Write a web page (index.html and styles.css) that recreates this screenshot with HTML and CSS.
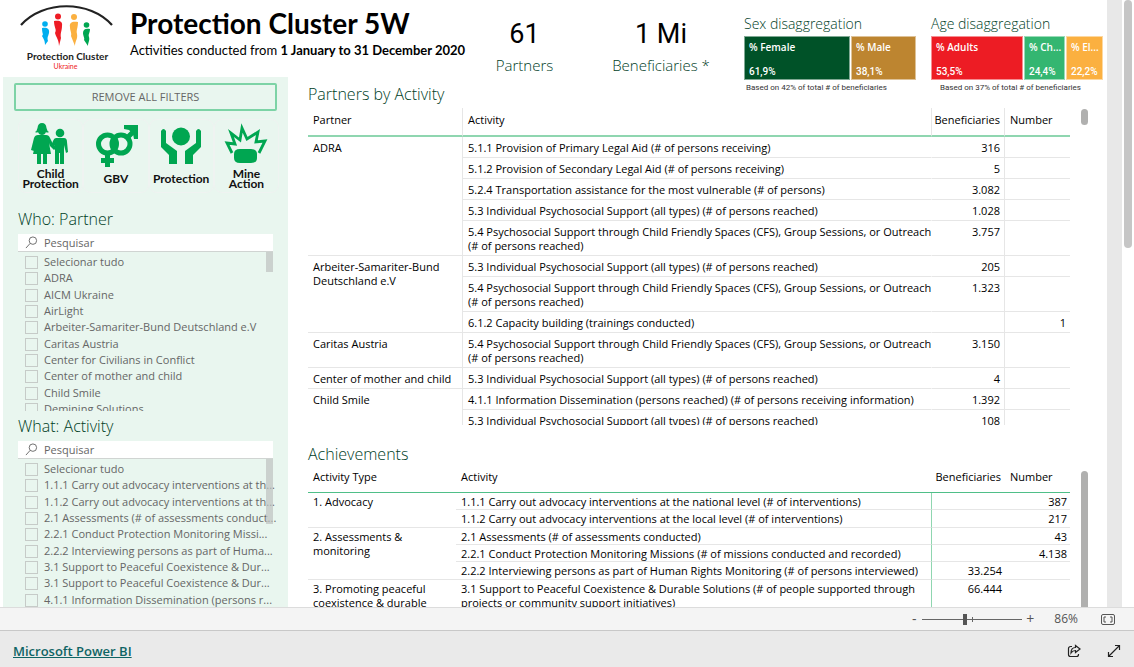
FILE: index.html
```html
<!DOCTYPE html>
<html lang="en">
<head>
<meta charset="utf-8">
<meta name="viewport" content="width=device-width, initial-scale=1">
<title>Protection Cluster 5W</title>
<link rel="stylesheet" href="styles.css">
</head>
<body>
<div class="viewer">
  <div class="report">
    <header class="masthead">
      <svg class="logo" viewBox="0 0 96 68" role="img" aria-label="Protection Cluster Ukraine">
        <path d="M1 21C23 -4 70 -4 92 21" fill="none" stroke="#222" stroke-width="2.2"/>
        <g fill="#00aeef"><circle cx="25" cy="20" r="2.800"/><path d="M22 24c4-1 8 0 7 5-1 4-2 4-1 8l-3 4c0-5-2-7-3-9 2-2 0-2 0-8z"/></g>
        <g fill="#ee1c25"><circle cx="38" cy="12.500" r="3"/><path d="M34 17c5-1 9 0 8 5 0 5-2 7-1 12l-2 8c0-6-3-9-4-13 2-4-1-5-1-12z"/></g>
        <g fill="#fbb040"><circle cx="54" cy="13" r="3"/><path d="M58 18c-5-1-9 0-8 5 0 4 2 6 1 9l4 10c0-5 3-7 2-12-1-4 1-6 1-12z"/></g>
        <g fill="#00a651"><circle cx="66.500" cy="21" r="2.800"/><path d="M70 25c-4-1-7 0-7 4 0 3 2 5 1 7l4 6c0-4 2-5 1-9-1-3 1-4 1-8z"/></g>
        <text x="47.500" y="56" text-anchor="middle" class="logo-name">Protection Cluster</text>
        <text x="45.500" y="65" text-anchor="middle" class="logo-place">Ukraine</text>
      </svg>
      <div>
        <h1 class="title">Protection Cluster 5W</h1>
        <p class="subtitle">Activities conducted from <b>1 January to 31 December 2020</b></p>
      </div>
    </header>

    <section class="summary">
      <div class="kpi"><strong class="kpi-value">61</strong><span class="kpi-label">Partners</span></div>
      <div class="kpi kpi-wide"><strong class="kpi-value">1 Mi</strong><span class="kpi-label">Beneficiaries *</span></div>
      <div class="split">
        <h2 class="heading small">Sex disaggregation</h2>
        <div class="treemap sex">
          <div class="tile female"><span>% Female</span><span class="share">61,9%</span></div>
          <div class="tile male"><span>% Male</span><span class="share">38,1%</span></div>
        </div>
        <p class="note">Based on 42% of total # of beneficiaries</p>
      </div>
      <div class="split">
        <h2 class="heading small">Age disaggregation</h2>
        <div class="treemap age">
          <div class="tile adults"><span>% Adults</span><span class="share">53,5%</span></div>
          <div class="tile children"><span>% Ch...</span><span class="share">24,4%</span></div>
          <div class="tile elderly"><span>% El...</span><span class="share">22,2%</span></div>
        </div>
        <p class="note indent">Based on 37% of total # of beneficiaries</p>
      </div>
    </section>

    <aside class="sidebar">
      <button class="reset" type="button">REMOVE ALL FILTERS</button>
      <div class="sectors">
        <button class="sector" type="button">
          <svg viewBox="0 0 44 42" aria-hidden="true"><g fill="#00a651"><path d="M6 9q2-1 2.500-4Q9 0 13 0t4.500 5Q18 8 20 9q-2 1-3 0-1 3-4 3t-4-3q-1 1-3 0z"/><path d="M9 12h8q3 0 4 3l4 8 4-3 1 2-5 5-4-4-1-3 2 11h-4v10h-4V31h-2v10H8V31H4L7 18l-2 10-3-1 3-12q1-3 4-3z"/><circle cx="31" cy="10" r="4.300"/><path d="M27 15h8q3 0 3 4l1 10-2 1-2-8v19h-4V30h-1v11h-4V22l-1 3-3-2 2-5q1-3 3-3z"/></g></svg>
          <span>Child<br>Protection</span>
        </button>
        <button class="sector" type="button">
          <svg viewBox="0 0 44 42" aria-hidden="true"><g fill="none" stroke="#00a651" stroke-width="5"><circle cx="13.500" cy="21" r="9"/><circle cx="27" cy="21" r="9"/><path d="M13.500 30v14M7 37.500h13M33 15l6-6"/></g><path d="M30 2h14v14h-4l-1-5-4-4-5-1z" fill="#00a651"/></svg>
          <span>GBV</span>
        </button>
        <button class="sector" type="button">
          <svg viewBox="0 0 44 42" aria-hidden="true"><g fill="#00a651"><circle cx="22" cy="13.500" r="9"/><path d="M2 8q2.500-4 5 0v12l11 8v13H10V32L2 24zM42 8q-2.500-4-5 0v12l-11 8v13h8V32l8-8z"/></g></svg>
          <span>Protection</span>
        </button>
        <button class="sector" type="button">
          <svg viewBox="0 0 44 42" aria-hidden="true"><path d="M8 30L3 20l8 1-4-11 9 7 2-12 5 11 11-7-2 10 9-1-6 12" fill="none" stroke="#00a651" stroke-width="2.800"/><path d="M16 26h11q6 0 6 5v4q0 5-6 5H16q-6 0-6-5v-4q0-5 6-5z" fill="#00a651"/></svg>
          <span>Mine<br>Action</span>
        </button>
      </div>

      <h2 class="heading">Who: Partner</h2>
      <label class="search"><svg viewBox="0 0 14 14" aria-hidden="true"><circle cx="8.500" cy="5" r="4"/><path d="M5.500 8L1 13"/></svg><input type="text" placeholder="Pesquisar" aria-label="Pesquisar partner"></label>
      <div class="listbox">
        <ul class="options">
          <li><label><input type="checkbox"><span>Selecionar tudo</span></label></li>
          <li><label><input type="checkbox"><span>ADRA</span></label></li>
          <li><label><input type="checkbox"><span>AICM Ukraine</span></label></li>
          <li><label><input type="checkbox"><span>AirLight</span></label></li>
          <li><label><input type="checkbox"><span>Arbeiter-Samariter-Bund Deutschland e.V</span></label></li>
          <li><label><input type="checkbox"><span>Caritas Austria</span></label></li>
          <li><label><input type="checkbox"><span>Center for Civilians in Conflict</span></label></li>
          <li><label><input type="checkbox"><span>Center of mother and child</span></label></li>
          <li><label><input type="checkbox"><span>Child Smile</span></label></li>
          <li><label><input type="checkbox"><span>Demining Solutions</span></label></li>
        </ul>
        <i class="list-thumb"></i>
      </div>

      <h2 class="heading">What: Activity</h2>
      <label class="search"><svg viewBox="0 0 14 14" aria-hidden="true"><circle cx="8.500" cy="5" r="4"/><path d="M5.500 8L1 13"/></svg><input type="text" placeholder="Pesquisar" aria-label="Pesquisar activity"></label>
      <div class="listbox">
        <ul class="options">
          <li><label><input type="checkbox"><span>Selecionar tudo</span></label></li>
          <li><label><input type="checkbox"><span>1.1.1 Carry out advocacy interventions at th...</span></label></li>
          <li><label><input type="checkbox"><span>1.1.2 Carry out advocacy interventions at th...</span></label></li>
          <li><label><input type="checkbox"><span>2.1 Assessments (# of assessments conduct...</span></label></li>
          <li><label><input type="checkbox"><span>2.2.1 Conduct Protection Monitoring Missi...</span></label></li>
          <li><label><input type="checkbox"><span>2.2.2 Interviewing persons as part of Huma...</span></label></li>
          <li><label><input type="checkbox"><span>3.1 Support to Peaceful Coexistence &amp; Dur...</span></label></li>
          <li><label><input type="checkbox"><span>3.1 Support to Peaceful Coexistence &amp; Dur...</span></label></li>
          <li><label><input type="checkbox"><span>4.1.1 Information Dissemination (persons r...</span></label></li>
        </ul>
        <i class="list-thumb tall"></i>
      </div>
    </aside>

    <main class="main">
      <h2 class="heading">Partners by Activity</h2>
      <div class="pane partners-pane">
        <table class="grid partners">
          <colgroup><col class="c-name"><col><col class="c-ben"><col class="c-num"></colgroup>
          <thead><tr><th>Partner</th><th>Activity</th><th class="num">Beneficiaries</th><th>Number</th></tr></thead>
          <tbody>
            <tr><td rowspan="5">ADRA</td><td>5.1.1 Provision of Primary Legal Aid (# of persons receiving)</td><td class="num">316</td><td></td></tr>
            <tr><td>5.1.2 Provision of Secondary Legal Aid (# of persons receiving)</td><td class="num">5</td><td></td></tr>
            <tr><td>5.2.4 Transportation assistance for the most vulnerable (# of persons)</td><td class="num">3.082</td><td></td></tr>
            <tr><td>5.3 Individual Psychosocial Support (all types) (# of persons reached)</td><td class="num">1.028</td><td></td></tr>
            <tr><td>5.4 Psychosocial Support through Child Friendly Spaces (CFS), Group Sessions, or Outreach<br>(# of persons reached)</td><td class="num">3.757</td><td></td></tr>
            <tr><td rowspan="3">Arbeiter-Samariter-Bund<br>Deutschland e.V</td><td>5.3 Individual Psychosocial Support (all types) (# of persons reached)</td><td class="num">205</td><td></td></tr>
            <tr><td>5.4 Psychosocial Support through Child Friendly Spaces (CFS), Group Sessions, or Outreach<br>(# of persons reached)</td><td class="num">1.323</td><td></td></tr>
            <tr><td>6.1.2 Capacity building (trainings conducted)</td><td></td><td class="num">1</td></tr>
            <tr><td>Caritas Austria</td><td>5.4 Psychosocial Support through Child Friendly Spaces (CFS), Group Sessions, or Outreach<br>(# of persons reached)</td><td class="num">3.150</td><td></td></tr>
            <tr><td>Center of mother and child</td><td>5.3 Individual Psychosocial Support (all types) (# of persons reached)</td><td class="num">4</td><td></td></tr>
            <tr><td rowspan="2">Child Smile</td><td>4.1.1 Information Dissemination (persons reached) (# of persons receiving information)</td><td class="num">1.392</td><td></td></tr>
            <tr><td>5.3 Individual Psychosocial Support (all types) (# of persons reached)</td><td class="num">108</td><td></td></tr>
          </tbody>
        </table>
        <i class="pane-thumb short"></i>
      </div>

      <h2 class="heading">Achievements</h2>
      <div class="pane results-pane">
        <table class="grid results">
          <colgroup><col class="c-type"><col><col class="c-ben"><col class="c-num"></colgroup>
          <thead><tr><th>Activity Type</th><th>Activity</th><th class="num">Beneficiaries</th><th>Number</th></tr></thead>
          <tbody>
            <tr><td rowspan="2">1. Advocacy</td><td>1.1.1 Carry out advocacy interventions at the national level (# of interventions)</td><td></td><td class="num">387</td></tr>
            <tr class="last"><td>1.1.2 Carry out advocacy interventions at the local level (# of interventions)</td><td></td><td class="num">217</td></tr>
            <tr><td rowspan="3">2. Assessments &amp;<br>monitoring</td><td>2.1 Assessments (# of assessments conducted)</td><td></td><td class="num">43</td></tr>
            <tr><td>2.2.1 Conduct Protection Monitoring Missions (# of missions conducted and recorded)</td><td></td><td class="num">4.138</td></tr>
            <tr class="last"><td>2.2.2 Interviewing persons as part of Human Rights Monitoring (# of persons interviewed)</td><td class="num">33.254</td><td></td></tr>
            <tr><td>3. Promoting peaceful<br>coexistence &amp; durable<br>solutions</td><td>3.1 Support to Peaceful Coexistence &amp; Durable Solutions (# of people supported through<br>projects or community support initiatives)</td><td class="num">66.444</td><td></td></tr>
          </tbody>
        </table>
        <i class="pane-thumb"></i>
      </div>
    </main>
  </div>
  <div class="gutter"></div>
  <div class="page-scroll"><i></i></div>
</div>

<div class="zoombar">
  <button type="button" aria-label="Zoom out">-</button>
  <span class="slider"><input type="range" min="0" max="100" value="42" aria-label="Zoom"></span>
  <button type="button" aria-label="Zoom in">+</button>
  <output class="level">86%</output>
  <button class="fit" type="button" aria-label="Fit to page"><svg viewBox="0 0 14 11"><rect x=".5" y=".5" width="13" height="10" rx="1.500"/><path d="M5 3H3v5h2M9 3h2v5H9"/></svg></button>
</div>

<footer class="footer">
  <a class="brand" href="#">Microsoft Power BI</a>
  <button type="button" aria-label="Share"><svg viewBox="0 0 14 14"><path d="M5 2.500H3.500a2 2 0 0 0-2 2v6a2 2 0 0 0 2 2h6a2 2 0 0 0 2-2V10M8.500 1.500l4.500 3.500-4.500 3.500v-2C6 6.500 5 7.500 4 9c0-3.500 2-5.500 4.500-5.500z"/></svg></button>
  <button type="button" aria-label="Full screen"><svg viewBox="0 0 14 14"><path d="M1.500 12.500l11-11M8 1.500h4.500V6M1.500 8v4.500H6"/></svg></button>
</footer>
</body>
</html>
```
FILE: styles.css
```css
* { box-sizing: border-box; }

body {
  margin: 0;
  height: 100vh;
  display: flex;
  flex-direction: column;
  overflow: hidden;
  font-family: "Open Sans", "Noto Sans", sans-serif;
  font-size: 11px;
  line-height: 14px;
  color: #000;
  background: #fff;
}

h1, h2, p, ul { margin: 0; padding: 0; }
button { font: inherit; padding: 0; border: 0; background: none; color: inherit; }

.viewer { flex: 1; min-height: 0; display: flex; }
.report {
  flex: 1;
  min-width: 0;
  display: grid;
  grid-template-columns: 288px 180px minmax(0, 1fr);
  grid-template-rows: 77px 6px minmax(0, 1fr);
  overflow: hidden;
}
.gutter { width: 15px; background: #e8e8e8; }
.page-scroll { width: 12px; padding: 0 2px; }
.page-scroll i { display: block; height: 248px; border-radius: 4px; background: #c6c6c6; }

/* Title block */
.masthead { grid-area: 1 / 1 / 2 / 3; display: flex; gap: 14px; padding: 4px 0 0 20px; white-space: nowrap; }
.logo { width: 96px; height: 68px; flex: none; }
.logo-name { font: 700 10px Lato, sans-serif; fill: #222; }
.logo-place { font: 7px Lato, sans-serif; fill: #ee1c25; }
.title { font: 700 28px/38px "Lato", sans-serif; color: #000; }
.subtitle { font: 13px/17px "Lato", sans-serif; color: #000; }

/* Figures and treemaps */
.summary { grid-area: 1 / 3 / 3 / 4; display: flex; justify-content: flex-end; gap: 15px; padding-right: 4px; }
.kpi { flex: none; display: flex; flex-direction: column; align-items: center; width: 107px; padding-top: 16px; }
.kpi-wide { width: 136px; }
.kpi-value { font: 400 27px/36px Roboto, sans-serif; color: #000; }
.kpi-label { font-size: 15px; font-weight: 300; line-height: 26px; color: #00401f; white-space: nowrap; }
.heading { font-size: 16px; font-weight: 300; line-height: 18px; color: #00401f; }
.heading.small { font-size: 14px; line-height: 20px; }
.split { flex: none; width: 172px; padding-top: 14px; white-space: nowrap; }
.treemap { display: grid; gap: 1px; height: 44px; margin-top: 2px; }
.sex { grid-template-columns: 106fr 65fr; }
.age { grid-template-columns: 92fr 41fr 37fr; }
.tile {
  display: flex;
  flex-direction: column;
  justify-content: space-between;
  min-width: 0;
  padding: 4px 0 0 4px;
  overflow: hidden;
  color: #fff;
  font-size: 10px;
  font-weight: 600;
  line-height: 13px;
  border: 1px solid rgba(255, 255, 255, .5);
}
.share { font: 500 10px/14px Roboto, sans-serif; }
.female { background: #005228; }
.male { background: #bd8530; }
.adults { background: #ed1c24; }
.children { background: #34b671; }
.elderly { background: #fbb040; }
.note { font: 8px/10px Roboto, sans-serif; padding: 3px 0 0 2px; color: #333; }
.note.indent { padding-left: 9px; }

/* Filters */
.sidebar {
  grid-area: 2 / 1 / 4 / 2;
  margin-left: 3px;
  padding: 6px 11px 0;
  overflow: hidden;
  background: #e9f6ef;
  color: #666;
}
.reset { display: block; width: 100%; height: 28px; border: 2px solid #7dd3a6; border-radius: 2px; }
.sectors { display: grid; grid-template-columns: repeat(4, 1fr); margin: 8px -2px 17px 4px; }
.sector {
  display: flex;
  flex-direction: column;
  align-items: center;
  height: 74px;
  padding-top: 3px;
  border: 1px solid #eff3f1;
  border-radius: 8px;
  color: #111;
  font: 700 12px/10px Lato, sans-serif;
}
.sector svg { width: 44px; height: 42px; overflow: visible; }
.sector span { flex: 1; display: flex; align-items: center; }
.sidebar .heading { margin: 0 4px 6px; }
.search {
  display: flex;
  align-items: center;
  gap: 6px;
  height: 18px;
  margin: 0 4px;
  padding-left: 7px;
  background: #fff;
  border-bottom: 1px solid #d0d4d2;
}
.search svg { width: 13px; height: 13px; fill: none; stroke: #666; }
.search input { flex: 1; min-width: 0; height: 16px; padding: 0; border: 0; outline: 0; font: inherit; background: none; }
.search input::placeholder { color: #666; opacity: 1; }
.listbox { position: relative; height: 159px; margin: 0 0 6px 4px; overflow: hidden; }
.options { list-style: none; padding: 2px 0 0 7px; }
.options li:nth-child(3n) { padding-top: 1px; }
.options label { display: flex; gap: 6px; align-items: center; height: 16px; white-space: nowrap; }
.options input { appearance: none; flex: none; width: 13px; height: 13px; margin: 0; border: 1px solid #c6cbc8; }
.list-thumb { position: absolute; top: 0; right: 4px; width: 7px; height: 20px; background: rgba(190, 194, 192, .7); }
.list-thumb.tall { height: 65px; }

/* Tables */
.main { grid-area: 3 / 2 / 4 / 4; padding: 0 19px 0 20px; overflow: hidden; display: flex; flex-direction: column; }
.main .heading { flex: none; line-height: 22px; }
.pane { display: flex; gap: 11px; align-items: flex-start; overflow: hidden; }
.partners-pane { flex: none; height: 317px; margin: 3px 0 18px; }
.results-pane { flex: 1; min-height: 0; margin-top: 1px; }
.pane-thumb { flex: none; width: 7px; border-radius: 4px 4px 0 0; background: #b0b0af; align-self: stretch; margin-top: 5px; }
.pane-thumb.short { align-self: flex-start; height: 16px; margin-top: 1px; border-radius: 4px; }
.grid { flex: 1; width: 100%; min-width: 0; table-layout: fixed; border-collapse: separate; border-spacing: 0; }
.c-name { width: 155px; }
.c-type { width: 148px; }
.c-ben { width: 73px; }
.c-num { width: 65px; }
.grid th { font-weight: 400; text-align: left; padding: 0 5px; white-space: nowrap; }
.grid td { padding: 0 5px; vertical-align: top; white-space: nowrap; border-bottom: 1px solid #e6e6e6; }
.grid .num { text-align: right; }
.grid th.num { padding-left: 0; }
.partners th { height: 29px; padding-bottom: 3px; border-bottom: 2px solid #8fd6b0; }
.partners td { height: 21px; padding-top: 4px; padding-bottom: 2px; }
.partners th:not(:last-child), .partners td:not(:last-child) { border-right: 1px solid #e6e6e6; }
.partners td:nth-last-child(3) { border-right-color: transparent; }
.partners .num { padding-right: 4px; }
.results th { height: 27px; padding-bottom: 4px; border-bottom: 1px solid #4fbf88; }
.results th.num { padding-right: 4px; }
.results td { height: 17px; padding-top: 2px; }
.results td.num { padding-right: 3px; }
.results .last td { height: 18px; }
.results td:nth-last-child(3) { border-right: 1px solid #8fd6b0; }

/* Zoom strip and footer */
.zoombar {
  flex: none;
  display: flex;
  align-items: center;
  justify-content: flex-end;
  height: 24px;
  padding-right: 19px;
  background: #f4f4f4;
  border-top: 1px solid #dcdcdc;
  border-bottom: 1px solid #c8c8c8;
  color: #555;
}
.zoombar button { width: 16px; font-size: 14px; }
.slider { display: flex; width: 100px; background: linear-gradient(#666, #666) 50px 50% / 1px 5px no-repeat; }
.slider input { appearance: none; width: 100%; height: 12px; margin: 0; background: linear-gradient(#666, #666) 0 50% / 100% 1px no-repeat; }
.slider input::-webkit-slider-thumb { appearance: none; width: 4px; height: 11px; background: #555; }
.level { margin: 0 23px 0 16px; font-size: 12px; }
.zoombar .fit { width: 14px; height: 11px; display: flex; }
.fit svg { width: 14px; height: 11px; fill: none; stroke: #555; }
.footer { flex: none; display: flex; align-items: center; gap: 26px; height: 36px; padding: 3px 13px 0; background: #eaeaea; }
.brand { margin-right: auto; font-size: 13px; font-weight: 600; line-height: 18px; color: #0f6464; }
.footer button { display: flex; }
.footer svg { width: 14px; height: 14px; fill: none; stroke: #222; stroke-width: 1.2; }
```
